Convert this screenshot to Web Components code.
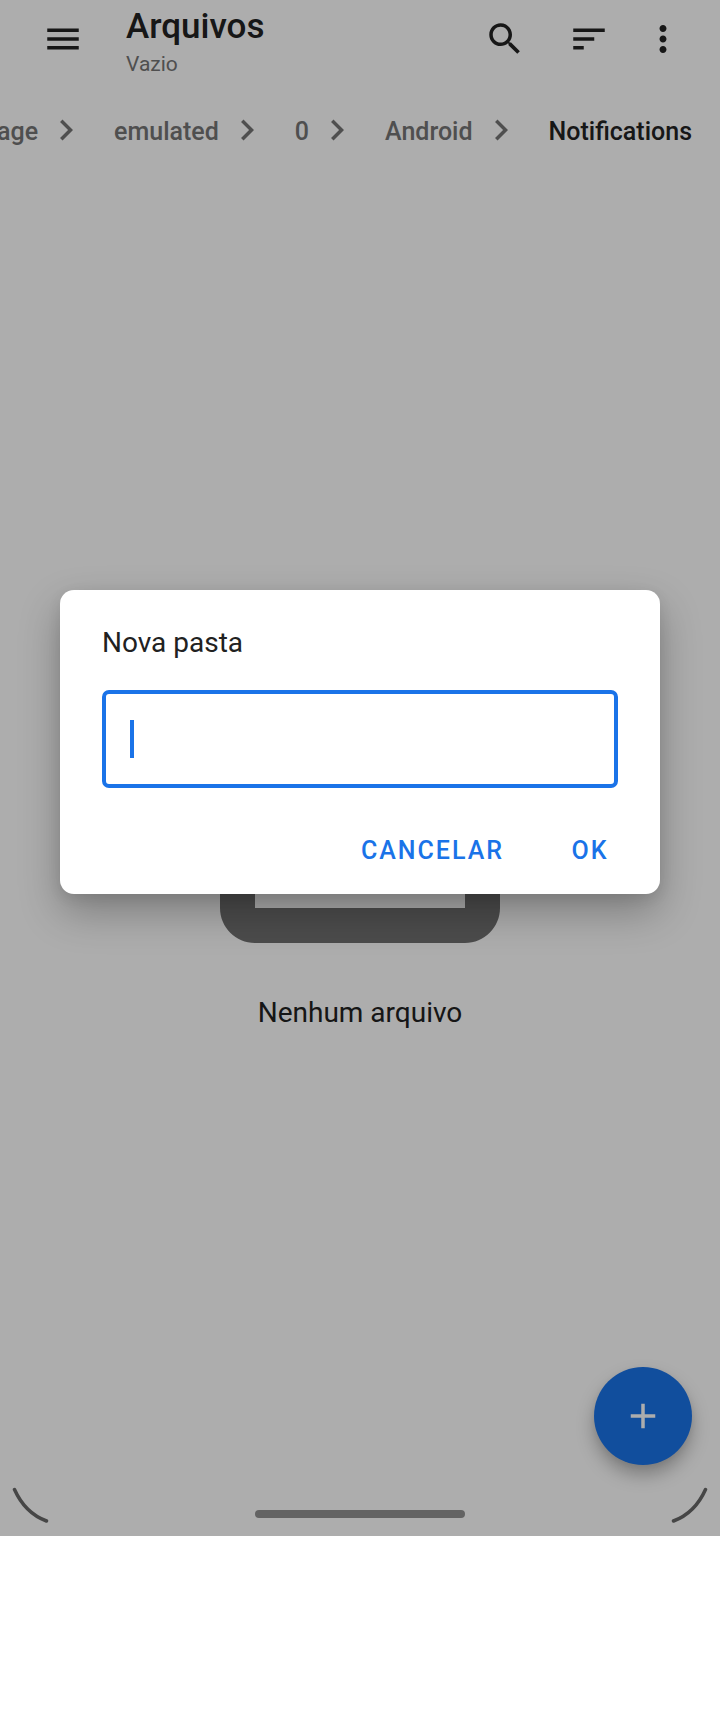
<!DOCTYPE html>
<html lang="pt-BR">
<head>
<meta charset="utf-8">
<meta name="viewport" content="width=device-width, initial-scale=1">
<title>Arquivos</title>
<style>
  body { margin: 0; background: #fff; font-family: Roboto, "Noto Sans", sans-serif; color: #212121; }
</style>
</head>
<body>
<files-app></files-app>

<template id="files-app">
  <style>
    :host { display: flex; flex-direction: column; min-height: 100vh; box-sizing: border-box; padding-bottom: 176px; }
    .screen { position: relative; flex: 1; display: flex; flex-direction: column; background: #fff; overflow: hidden; }
    empty-state { flex: 1; }
    add-button { position: absolute; right: 28px; bottom: 71px; }
    .scrim { position: absolute; inset: 0; display: flex; align-items: center; padding: 0 60px 52px; background: rgba(0, 0, 0, .32); }
    name-dialog { flex: 1; }
  </style>
  <div class="screen">
    <app-bar>
      <span slot="title">Arquivos</span>
      <span slot="subtitle">Vazio</span>
    </app-bar>
    <bread-crumbs>
      <bread-crumb>storage</bread-crumb>
      <bread-crumb>emulated</bread-crumb>
      <bread-crumb>0</bread-crumb>
      <bread-crumb>Android</bread-crumb>
      <bread-crumb current>Notifications</bread-crumb>
    </bread-crumbs>
    <empty-state>Nenhum arquivo</empty-state>
    <add-button></add-button>
    <gesture-bar></gesture-bar>
    <div class="scrim">
      <name-dialog><span slot="title">Nova pasta</span></name-dialog>
    </div>
  </div>
</template>

<template id="app-bar">
  <style>
    :host { display: flex; align-items: center; height: 78px; padding: 0 26px 0 21px; }
    button { display: flex; align-items: center; justify-content: center; width: 84px; height: 78px; padding: 0; border: 0; background: none; color: #232323; }
    button.more { width: 63px; }
    svg { width: 42px; height: 42px; fill: currentColor; }
    .titles { flex: 1; padding: 6px 0 0 21px; }
    h1, p { margin: 0; }
    h1 { font-size: 35px; line-height: 44px; font-weight: 500; color: #232323; }
    p { font-size: 21px; line-height: 30px; color: #757575; }
  </style>
  <button type="button" aria-label="Menu"><svg viewBox="0 0 24 24"><path d="M3 18h18v-2H3v2zm0-5h18v-2H3v2zm0-7v2h18V6H3z"/></svg></button>
  <div class="titles">
    <h1><slot name="title"></slot></h1>
    <p><slot name="subtitle"></slot></p>
  </div>
  <button type="button" aria-label="Pesquisar"><svg viewBox="0 0 24 24"><path d="M15.5 14h-.79l-.28-.27C15.41 12.59 16 11.11 16 9.5 16 5.91 13.09 3 9.5 3S3 5.91 3 9.5 5.91 16 9.5 16c1.61 0 3.09-.59 4.23-1.57l.27.28v.79l5 4.99L20.49 19l-4.99-5zm-6 0C7.01 14 5 11.99 5 9.5S7.01 5 9.5 5 14 7.01 14 9.5 11.99 14 9.5 14z"/></svg></button>
  <button type="button" aria-label="Ordenar"><svg viewBox="0 0 24 24"><path d="M3 18h6v-2H3v2zM3 6v2h18V6H3zm0 7h12v-2H3v2z"/></svg></button>
  <button type="button" class="more" aria-label="Mais opções"><svg viewBox="0 0 24 24"><path d="M12 8c1.1 0 2-.9 2-2s-.9-2-2-2-2 .9-2 2 .9 2 2 2zm0 2c-1.1 0-2 .9-2 2s.9 2 2 2 2-.9 2-2-.9-2-2-2zm0 6c-1.1 0-2 .9-2 2s.9 2 2 2 2-.9 2-2-.9-2-2-2z"/></svg></button>
</template>

<template id="bread-crumbs">
  <style>
    :host { display: flex; justify-content: flex-end; align-items: center; height: 84px; margin-top: 10px; overflow: hidden; }
  </style>
  <slot></slot>
</template>

<template id="bread-crumb">
  <style>
    :host { display: flex; flex: none; align-items: center; }
    a { padding: 4px 7px 0 27px; font-size: 25px; line-height: 30px; font-weight: 500; color: #757575; text-decoration: none; }
    svg { width: 42px; height: 42px; fill: #757575; }
    :host([current]) a { color: #232323; padding-right: 28px; }
    :host([current]) svg { display: none; }
  </style>
  <a href="#"><slot></slot></a>
  <svg viewBox="0 0 24 24" aria-hidden="true"><path d="M10 6L8.590 7.410 13.170 12l-4.580 4.590L10 18l6-6z"/></svg>
</template>

<template id="empty-state">
  <style>
    :host { display: flex; flex-direction: column; align-items: center; justify-content: center; padding-bottom: 120px; }
    svg { width: 420px; height: 420px; fill: #717171; }
    p { margin: 18px 0 0; font-size: 28px; line-height: 34px; color: #212121; }
  </style>
  <svg viewBox="0 0 24 24" aria-hidden="true"><path d="M14 2H6c-1.100 0-2 .9-2 2v16c0 1.100.9 2 2 2h12c1.100 0 2-.9 2-2V8l-6-6zM6 20V4h7v5h5v11H6z"/></svg>
  <p><slot></slot></p>
</template>

<template id="add-button">
  <style>
    :host { display: block; }
    button { display: flex; align-items: center; justify-content: center; width: 98px; height: 98px; padding: 0; border: 0; border-radius: 50%; background: #1a73e8; box-shadow: 0 10px 18px rgba(0, 0, 0, .28), 0 2px 6px rgba(0, 0, 0, .06); }
    svg { width: 42px; height: 42px; fill: #fff; }
  </style>
  <button type="button" aria-label="Adicionar"><svg viewBox="0 0 24 24"><path d="M19 13h-6v6h-2v-6H5v-2h6V5h2v6h6v2z"/></svg></button>
</template>

<template id="gesture-bar">
  <style>
    :host { position: absolute; inset: auto 0 0; display: flex; justify-content: space-between; align-items: flex-end; padding: 0 12px 13px; }
    svg { width: 38px; height: 36px; fill: none; stroke: #676767; stroke-width: 3.500; stroke-linecap: round; }
    .pill { width: 210px; height: 8px; margin-bottom: 5px; border-radius: 4px; background: #939393; }
  </style>
  <svg viewBox="0 0 38 36"><path d="M2.500 2.500Q13 26 34.500 34"/></svg>
  <div class="pill"></div>
  <svg viewBox="0 0 38 36"><path d="M35.500 2.500Q25 26 3.500 34"/></svg>
</template>

<template id="name-dialog">
  <style>
    :host { display: block; box-sizing: border-box; padding: 36px 42px 12px; border-radius: 14px; background: #fff; box-shadow: 0 18px 40px rgba(0, 0, 0, .28), 0 4px 14px rgba(0, 0, 0, .08); }
    form { display: flex; flex-direction: column; }
    label { font-size: 28px; line-height: 34px; color: #212121; }
    input {
      box-sizing: border-box; width: 100%; height: 98px; margin-top: 30px; padding: 0 24px;
      border: 4px solid #1a73e8; border-radius: 7px; outline: 0; font: 28px/34px Roboto, sans-serif; color: #212121;
      background: linear-gradient(#1a73e8, #1a73e8) 24px center / 4px 38px no-repeat #fff;
    }
    .actions { display: flex; justify-content: flex-end; gap: 16px; margin: 32px -28px 0 0; }
    button { height: 62px; min-width: 112px; padding: 0 14px; border: 0; background: none; font: 500 25px/30px Roboto, sans-serif; letter-spacing: 2px; color: #1a73e8; text-transform: uppercase; }
  </style>
  <form role="dialog" aria-labelledby="caption">
    <label id="caption" for="name"><slot name="title"></slot></label>
    <input id="name" type="text" autocomplete="off">
    <div class="actions">
      <button type="button">CANCELAR</button>
      <button type="button">OK</button>
    </div>
  </form>
</template>

<script>
  const names = ['files-app', 'app-bar', 'bread-crumbs', 'bread-crumb', 'empty-state', 'add-button', 'gesture-bar', 'name-dialog'];
  for (const name of names) {
    customElements.define(name, class extends HTMLElement {
      constructor() {
        super();
        this.attachShadow({ mode: 'open' }).append(document.getElementById(name).content.cloneNode(true));
      }
    });
  }
</script>
</body>
</html>
